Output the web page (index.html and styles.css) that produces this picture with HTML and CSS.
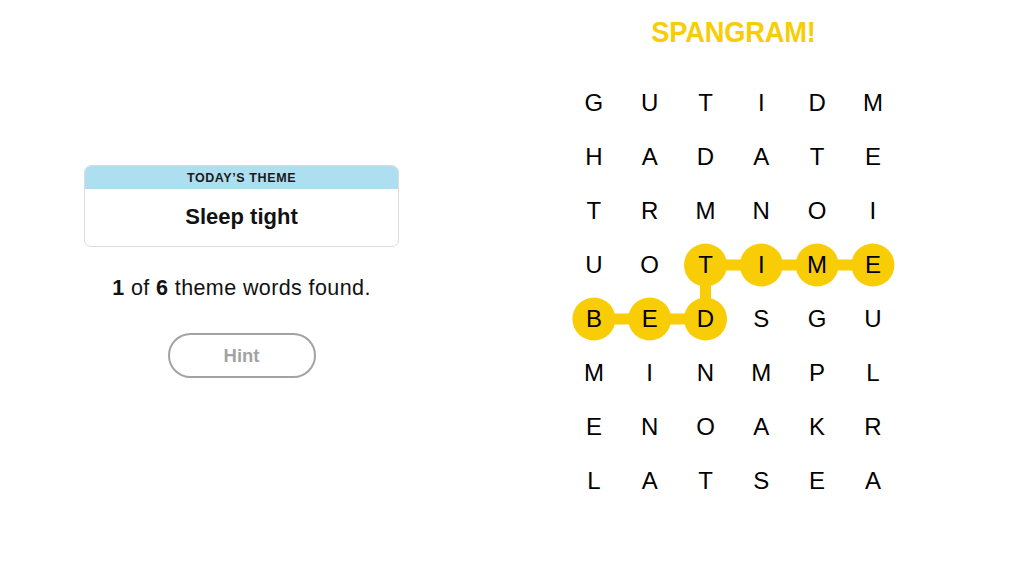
FILE: index.html
```html
<!DOCTYPE html>
<html>
<head>
<meta charset="utf-8">
<link rel="stylesheet" href="styles.css">
</head>
<body>
<div class="page">
  <section class="left">
    <div class="theme-card">
      <div class="theme-head">TODAY’S THEME</div>
      <div class="theme-body">Sleep tight</div>
    </div>
    <p class="found"><b>1</b> of <b>6</b> theme words found.</p>
    <button class="hint">Hint</button>
  </section>
  <section class="right">
    <h1 class="status"><span>SPANGRAM!</span></h1>
    <div class="board">
      <svg class="paths" width="335" height="432" viewBox="0 0 335 432">
        <g stroke="#f8cd05" stroke-width="11" stroke-linecap="butt" fill="none">
          <line x1="27.9" y1="243" x2="139.5" y2="243"/>
          <line x1="139.5" y1="243" x2="139.5" y2="189"/>
          <line x1="139.5" y1="189" x2="306.9" y2="189"/>
        </g>
        <g fill="#f8cd05">
          <circle cx="27.9" cy="243" r="21.5"/>
          <circle cx="83.7" cy="243" r="21.5"/>
          <circle cx="139.5" cy="243" r="21.5"/>
          <circle cx="139.5" cy="189" r="21.5"/>
          <circle cx="195.3" cy="189" r="21.5"/>
          <circle cx="251.1" cy="189" r="21.5"/>
          <circle cx="306.9" cy="189" r="21.5"/>
        </g>
      </svg>
      <div class="grid">
        <span>G</span><span>U</span><span>T</span><span>I</span><span>D</span><span>M</span>
        <span>H</span><span>A</span><span>D</span><span>A</span><span>T</span><span>E</span>
        <span>T</span><span>R</span><span>M</span><span>N</span><span>O</span><span>I</span>
        <span>U</span><span>O</span><span>T</span><span>I</span><span>M</span><span>E</span>
        <span>B</span><span>E</span><span>D</span><span>S</span><span>G</span><span>U</span>
        <span>M</span><span>I</span><span>N</span><span>M</span><span>P</span><span>L</span>
        <span>E</span><span>N</span><span>O</span><span>A</span><span>K</span><span>R</span>
        <span>L</span><span>A</span><span>T</span><span>S</span><span>E</span><span>A</span>
      </div>
    </div>
  </section>
</div>
</body>
</html>
```

FILE: styles.css
```css
* { box-sizing: border-box; }
html, body { margin: 0; padding: 0; background: #fff; }
body {
  font-family: "Liberation Sans", Arial, sans-serif;
  color: #121212;
  width: 1020px;
  height: 570px;
  overflow: hidden;
}
.page {
  display: flex;
  flex-direction: row;
}
.left {
  width: 483px;
  padding-top: 165px;
  display: flex;
  flex-direction: column;
  align-items: center;
}
.theme-card {
  width: 315px;
  border: 1px solid #dcdcdc;
  border-radius: 7px;
  overflow: hidden;
}
.theme-head {
  background: #aedff0;
  height: 23px;
  line-height: 24px;
  text-align: center;
  font-size: 12.5px;
  font-weight: 700;
  letter-spacing: 0.6px;
  color: #1a1a1a;
}
.theme-body {
  height: 57px;
  line-height: 55px;
  text-align: center;
  font-size: 22px;
  font-weight: 700;
}
.found {
  margin: 27px 0 0;
  font-size: 21.5px;
  line-height: 28px;
  letter-spacing: 0.4px;
}
.found b { font-weight: 700; }
.hint {
  margin-top: 31px;
  width: 148px;
  height: 45px;
  border: 2px solid #a3a3a3;
  border-radius: 23px;
  background: #fff;
  color: #a3a3a3;
  font-family: "Liberation Sans", Arial, sans-serif;
  font-size: 18.5px;
  font-weight: 700;
  padding: 0;
}
.right {
  width: 501px;
  display: flex;
  flex-direction: column;
  align-items: center;
  padding-top: 15px;
}
.status {
  margin: 0;
  height: 34px;
  line-height: 34px;
  font-size: 29px;
  font-weight: 700;
  color: #f8cd05;
  letter-spacing: -0.2px;
}
.status span {
  display: inline-block;
  transform: scaleX(0.94);
}
.board {
  position: relative;
  margin-top: 27px;
  width: 335px;
  height: 432px;
}
.paths {
  position: absolute;
  left: 0;
  top: 0;
}
.grid {
  position: relative;
  display: grid;
  grid-template-columns: repeat(6, 55.8px);
  grid-template-rows: repeat(8, 54px);
}
.grid span {
  display: flex;
  align-items: center;
  justify-content: center;
  font-size: 24px;
  color: #000;
}
```
